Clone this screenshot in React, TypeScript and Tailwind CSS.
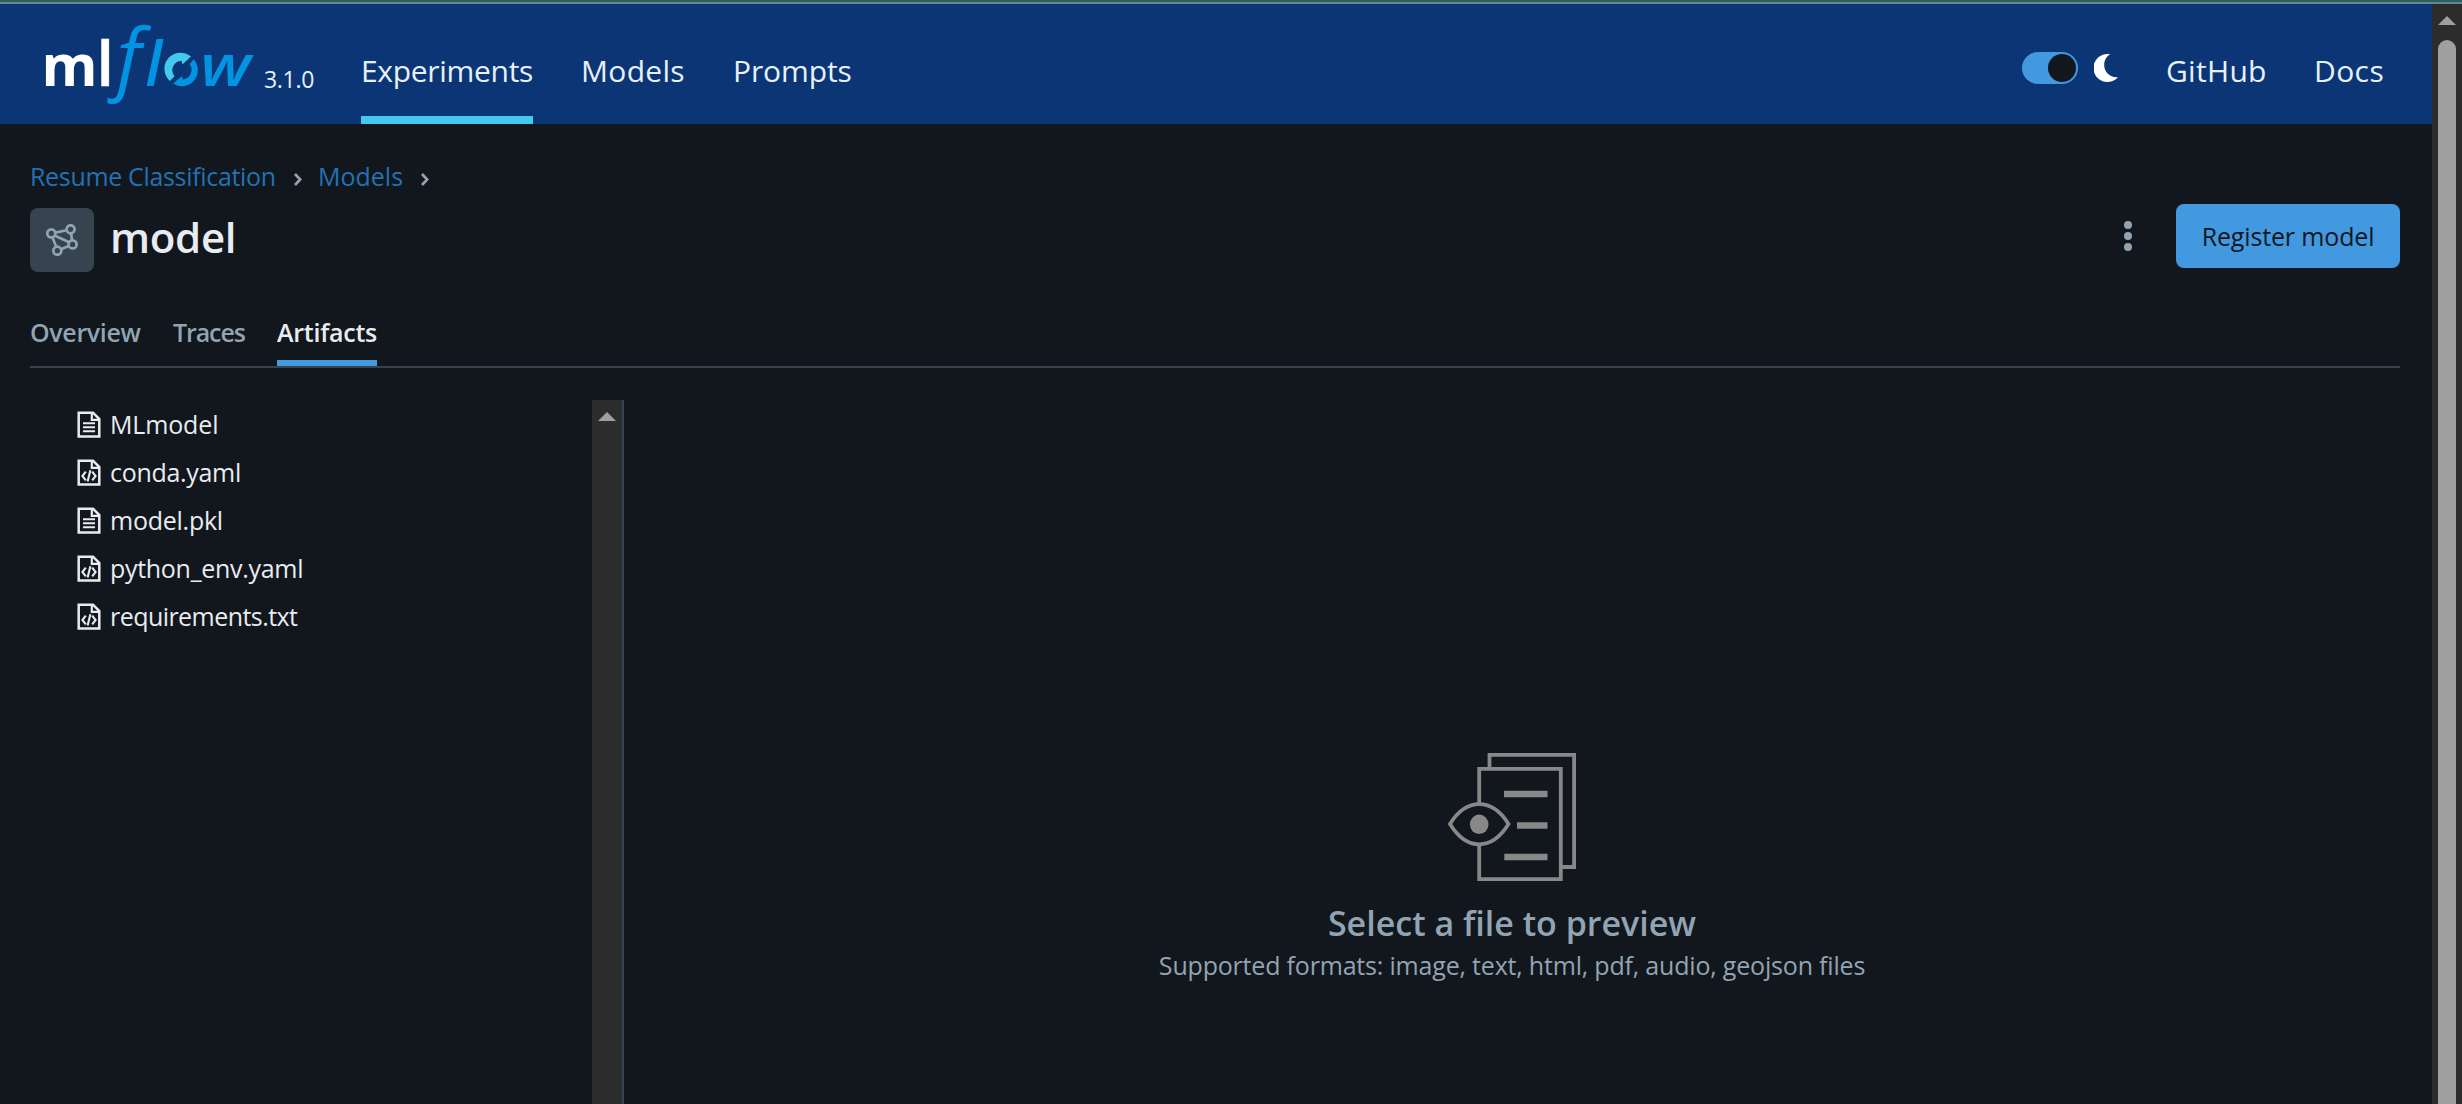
import React from "react";

const Logo = () => (
  <svg width="212" height="84" viewBox="0 0 212 84" className="shrink-0 overflow-visible font-['Open_Sans',sans-serif]">
    <text x="-4.6" y="62.3" fontSize="57" fontWeight="700" fill="#fff" textLength="56" lengthAdjust="spacingAndGlyphs">m</text>
    <text x="50.7" y="62.3" fontSize="61" fontWeight="600" fill="#fff" stroke="#fff" strokeWidth="0.6">l</text>
    <text x="70.5" y="61" fontSize="79.5" fontWeight="500" fontStyle="italic" fill="#0194e2">f</text>
    <text x="99.2" y="62.3" fontSize="61.5" fontWeight="600" fontStyle="italic" fill="#0194e2">l</text>
    <path d="M124 57A16 16 0 0 1 145 32.6L136.3 40.4L135.6 37A9.2 9.2 0 0 0 128.6 52.2Z" fill="#43c9ed" />
    <path d="M147.6 35.3A16 16 0 0 1 127.2 59.6L136 52L136.8 55.4A9.5 9.5 0 0 0 143.6 40.2Z" fill="#0194e2" />
    <text transform="translate(154.2 62.3) scale(1.18 1)" fontSize="57" fontWeight="600" fontStyle="italic" fill="#0194e2">w</text>
  </svg>
);

const Moon = () => (
  <svg width="24" height="28" viewBox="0 0 24 28" fill="#fff">
    <path d="M16.3 0.3A14 14 0 1 0 24 23.2C16 24 10.2 18 10.2 11C10.2 6 12.6 2.4 16.3 0.3Z" />
  </svg>
);

const Chevron = () => (
  <svg width="8" height="13" viewBox="0 0 8 13" fill="none" stroke="#92a4b3" strokeWidth="2.6">
    <path d="M1 1L6.2 6.5L1 12" />
  </svg>
);

const ModelIcon = () => (
  <svg width="32" height="32" viewBox="0 0 32 32" fill="none" stroke="#92a4b3" strokeWidth="2.7">
    <circle cx="5.3" cy="9.4" r="4" />
    <circle cx="24.6" cy="5.3" r="4" />
    <circle cx="26.6" cy="20.4" r="4" />
    <circle cx="11.3" cy="26.7" r="4" />
    <path d="M9.2 8.6L20.7 6.2M8.6 11.6L23.2 18.2M6.4 13.2L10.2 22.8M25.1 9.3L26 16.4M15 25.2L22.8 21.9" />
  </svg>
);

const FileIcon = ({ code }: { code?: boolean }) => (
  <svg width="24" height="28" viewBox="0 0 24 28" fill="none" stroke="#e8ecf0" strokeWidth="2.5" className="mt-0.5 shrink-0">
    <path d="M1.7 1.7H16L22.3 8V25.5H1.7Z" />
    <path d="M14.8 1.7V8.9H22.3" strokeWidth="2.2" />
    {code ? (
      <path d="M8.8 12.6L5.4 17L8.8 21.4M15.2 12.6L18.6 17L15.2 21.4M13.4 11.2L10.6 22.6" strokeWidth="2.1" />
    ) : (
      <path d="M6 12.2H18M6 16.2H18M6 20.2H18" strokeWidth="2.1" />
    )}
  </svg>
);

const PreviewIcon = () => (
  <svg width="128" height="128" viewBox="0 0 128 128" fill="none" stroke="#888" strokeWidth="3.8">
    <path d="M41.5 15V1.9H126.1V114H114" />
    <path d="M31.2 50V15.9H112.8V126.1H31.2V92" />
    <path d="M2 71C10 58 20 51.2 31.2 51.2S52.4 58 60.5 71C52.4 84 42.4 91.3 31.2 91.3S10 84 2 71Z" />
    <ellipse cx="31.2" cy="71.3" rx="9.3" ry="9.7" fill="#888" stroke="none" />
    <path d="M56 41H99.5M69 72.5H99.5M56.3 104H99.5" strokeWidth="6.3" />
  </svg>
);

const ArrowUp = () => (
  <svg width="18" height="9" viewBox="0 0 18 9" fill="#9f9f9f">
    <path d="M9 0L18 9H0Z" />
  </svg>
);

const files = [
  { name: "MLmodel", code: false, spacing: "tracking-[-0.15px]" },
  { name: "conda.yaml", code: true, spacing: "tracking-[-0.3px]" },
  { name: "model.pkl", code: false, spacing: "tracking-[-0.25px]" },
  { name: "python_env.yaml", code: true, spacing: "tracking-[-0.3px]" },
  { name: "requirements.txt", code: true, spacing: "tracking-[-0.55px]" },
];

export default function App() {
  return (
    <div className="flex h-[1104px] w-[2462px] flex-col overflow-hidden bg-[#11171c] font-['Open_Sans','Noto_Sans',sans-serif] text-[25px] leading-10 text-[#e8ecf0]">
      <div className="h-1 shrink-0 border-b-2 border-[#668a8c] bg-[#2f5b63]" />
      <div className="flex min-h-0 flex-1">
        <div className="flex w-[2432px] flex-col">
          <header className="flex h-[120px] shrink-0 bg-[#0b3574] pl-[46px] pr-12 text-[30px] text-[#e7f1fb]">
            <div className="flex pt-5">
              <Logo />
              <span className="ml-1.5 mt-[35px] w-[97px] text-[23px] leading-10 tracking-[-0.3px]">3.1.0</span>
            </div>
            <nav className="flex gap-12 whitespace-nowrap leading-[108px]">
              <a className="w-[172px] border-b-8 border-[#43c9ed] pt-[13px] tracking-[-0.31px]">Experiments</a>
              <a className="w-[104px] pt-[13px] tracking-[0.3px]">Models</a>
              <a className="pt-[13px] tracking-[-0.1px]">Prompts</a>
            </nav>
            <div className="ml-auto flex">
              <div className="mt-12 flex h-8 w-14 justify-end rounded-full bg-[#4299e0] p-0.5">
                <div className="size-7 rounded-full bg-[#11171c]" />
              </div>
              <div className="ml-4 mt-[50px]">
                <Moon />
              </div>
              <a className="ml-12 w-[100px] pt-[13px] leading-[108px] tracking-[0.3px]">GitHub</a>
              <a className="ml-12 w-[70px] pt-[13px] leading-[108px] tracking-[0.4px]">Docs</a>
            </div>
          </header>

          <main className="flex min-h-0 flex-1 flex-col pl-[30px] pr-8 pt-8">
            <div className="flex h-10 items-center text-[#2272b4]">
              <a className="w-[246px] whitespace-nowrap tracking-[-0.33px]">Resume Classification</a>
              <span className="ml-[18px] mt-1.5 w-6">
                <Chevron />
              </span>
              <a className="w-[85px]">Models</a>
              <span className="ml-[18px] mt-1.5">
                <Chevron />
              </span>
            </div>

            <div className="mt-2 flex h-[68px]">
              <div className="mt-1 flex size-16 items-center justify-center rounded-lg bg-[#37444f]">
                <ModelIcon />
              </div>
              <h1 className="ml-4 text-[42px] font-semibold leading-[66px] tracking-[-0.3px]">model</h1>
              <div className="ml-auto mr-11 flex h-16 flex-col items-center justify-center gap-[3px]">
                <span className="size-2 rounded-full bg-[#92a4b3]" />
                <span className="size-2 rounded-full bg-[#92a4b3]" />
                <span className="size-2 rounded-full bg-[#92a4b3]" />
              </div>
              <button className="h-16 w-[224px] rounded-lg bg-[#4299e0] tracking-[-0.15px] text-[#11171c]">Register model</button>
            </div>

            <div className="mt-8 flex h-16 shrink-0 gap-8 border-b-2 border-[#37444f] font-semibold leading-[56px] text-[#92a4b3]">
              <span className="w-[111px] tracking-[-0.35px]">Overview</span>
              <span className="w-[72px] tracking-[-1.1px]">Traces</span>
              <span className="w-[100px] border-b-[6px] border-[#4299e0] tracking-[-0.25px] text-[#e8ecf0]">Artifacts</span>
            </div>

            <div className="mt-8 flex min-h-0 flex-1">
              <div className="flex w-[594px] border-r-2 border-[#37444f]">
                <ul className="flex-1 pl-[47px]">
                  {files.map((f) => (
                    <li key={f.name} className="flex h-12 items-center">
                      <FileIcon code={f.code} />
                      <span className={`ml-[9px] ${f.spacing}`}>{f.name}</span>
                    </li>
                  ))}
                </ul>
                <div className="flex w-[30px] justify-center bg-[#2c2c2c] pt-3">
                  <ArrowUp />
                </div>
              </div>
              <div className="flex flex-1 flex-col items-center pt-[353px] text-[#92a4b3]">
                <PreviewIcon />
                <h2 className="mt-5 text-[34px] font-semibold leading-[44px]">Select a file to preview</h2>
                <p className="tracking-[-0.19px]">Supported formats: image, text, html, pdf, audio, geojson files</p>
              </div>
            </div>
          </main>
        </div>
        <div className="flex w-[30px] flex-col items-center bg-[#2c2c2c] pt-3">
          <ArrowUp />
          <div className="mt-[15px] w-[18px] flex-1 rounded-t-full bg-[#9f9f9f]" />
        </div>
      </div>
    </div>
  );
}
